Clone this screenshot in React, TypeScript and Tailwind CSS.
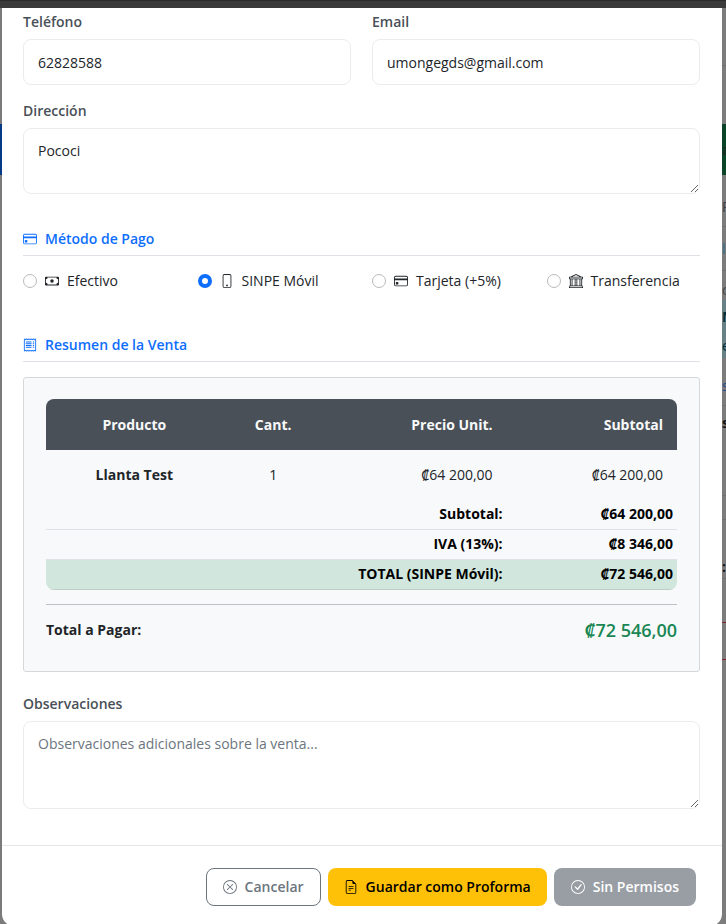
import type { ReactNode } from "react";
import {
  BsBank,
  BsCash,
  BsCheckCircle,
  BsCreditCard,
  BsFileEarmarkText,
  BsPhone,
  BsReceipt,
  BsXCircle,
} from "react-icons/bs";

const fieldClass =
  "block w-full rounded-lg border border-[#e9ecef] bg-white px-3.5 text-sm text-[#212529] placeholder:text-[#6c757d]";

function Field({ id, label, children }: { id: string; label: string; children: ReactNode }) {
  return (
    <div>
      <label htmlFor={id} className="mb-[7px] block text-sm leading-5 font-semibold text-[#495057]">
        {label}
      </label>
      {children}
    </div>
  );
}

function SectionTitle({ icon, children }: { icon: ReactNode; children: ReactNode }) {
  return (
    <h6 className="flex items-center gap-2 border-b border-[#dee2e6] pb-1.5 text-sm leading-5 font-semibold text-[#0d6efd]">
      {icon}
      {children}
    </h6>
  );
}

const methods = [
  { id: "efectivo", label: "Efectivo", icon: <BsCash size={14} /> },
  { id: "sinpe", label: "SINPE Móvil", icon: <BsPhone size={14} /> },
  { id: "tarjeta", label: "Tarjeta (+5%)", icon: <BsCreditCard size={14} /> },
  { id: "transferencia", label: "Transferencia", icon: <BsBank size={14} /> },
];

const totals = [
  { label: "Subtotal:", value: "₡64 200,00" },
  { label: "IVA (13%):", value: "₡8 346,00" },
];

function PageBehindLeft() {
  return (
    <div className="w-[2px] shrink-0 bg-[#7b7b7b]">
      <div className="h-[116px]" />
      <div className="h-[51px] bg-[#053a87]" />
    </div>
  );
}

// Rows of the page under the backdrop; only their left edge shows.
const behindRows = [
  { text: "", style: "h-[58px] border-b border-[#6f7071]" },
  { text: "", style: "h-[58px]" },
  { text: "a", style: "h-[51px] bg-[#0c442a] font-bold text-[#1c2b24]" },
  { text: "R", style: "h-[52px] border-b border-[#6f7071] pt-3 text-[#3c3d44]" },
  { text: "l", style: "h-[44px] border-b border-[#6f7071] text-[#2f6d8c]" },
  { text: "c", style: "h-[29px] pt-2 text-[#45474a]" },
  { text: "N", style: "h-[33px] bg-[#688186] font-bold text-[#04303a]" },
  { text: "e", style: "h-[25px] bg-[#688186] text-[#04303a]" },
  { text: "s", style: "h-[48px] border-b border-[#6f7071] pt-2 text-[#1f4a8a]" },
  { text: "s", style: "h-[34px] font-bold text-[#141619]" },
  { text: "", style: "h-[56px] border-b border-[#6f7071]" },
  { text: "", style: "h-[24px] border-b border-[#6f7071]" },
  { text: ":", style: "h-[59px] border-b border-[#6f7071] pt-9 font-bold text-[#141619]" },
  { text: "", style: "h-[44px] border-b border-[#842029]" },
  { text: "", style: "h-[37px] border-b border-[#842029]" },
];

function PageBehindRight() {
  return (
    <div aria-hidden="true" className="w-1 shrink-0 overflow-hidden bg-[#7c7c7c] text-sm leading-4">
      {behindRows.map((row, i) => (
        <div key={i} className={`flex items-center overflow-hidden ${row.style}`}>
          {row.text}
        </div>
      ))}
    </div>
  );
}

export default function App() {
  return (
    <div className="h-screen overflow-hidden bg-[#7b7b7b] font-['Open_Sans','Noto_Sans',sans-serif]">
      <div className="h-2 border-t border-[#2a2a2a] bg-[#3b3a3a]" />
      <div className="flex">
        <PageBehindLeft />
        <main className="min-w-0 flex-1 rounded-b-xl bg-white">
          <div className="pt-1 pr-[22px] pb-9 pl-[21px]">
            <div className="grid grid-cols-2 gap-x-[21px]">
              <Field id="telefono" label="Teléfono">
                <input id="telefono" type="tel" defaultValue="62828588" className={`${fieldClass} h-[46px]`} />
              </Field>
              <Field id="email" label="Email">
                <input id="email" type="email" defaultValue="umongegds@gmail.com" className={`${fieldClass} h-[46px]`} />
              </Field>
            </div>

            <div className="mt-4">
              <Field id="direccion" label="Dirección">
                <textarea id="direccion" defaultValue="Pococi" className={`${fieldClass} h-[66px] resize-y py-3`} />
              </Field>
            </div>

            <section className="mt-[35px]">
              <SectionTitle icon={<BsCreditCard size={14} />}>Método de Pago</SectionTitle>
              <div className="mt-[15px] grid grid-cols-4 gap-x-[21px]">
                {methods.map((m) => (
                  <label key={m.id} htmlFor={m.id} className="flex items-center gap-2 text-sm leading-5 whitespace-nowrap text-[#212529]">
                    <input
                      id={m.id}
                      type="radio"
                      name="metodo"
                      defaultChecked={m.id === "sinpe"}
                      className="size-3.5 shrink-0 appearance-none rounded-full border border-[#b8bbbe] bg-white checked:border-4 checked:border-[#0d6efd]"
                    />
                    {m.icon}
                    {m.label}
                  </label>
                ))}
              </div>
            </section>

            <section className="mt-11">
              <SectionTitle icon={<BsReceipt size={14} />}>Resumen de la Venta</SectionTitle>
              <div className="mt-[15px] rounded-[3px] border border-[#d5d7d9] bg-[#f8f9fa] px-[22px] pt-[21px] pb-[29px]">
                <div className="overflow-hidden rounded-lg">
                  <table className="w-full table-fixed text-sm leading-5">
                    <colgroup>
                      <col className="w-[28%]" />
                      <col className="w-[16%]" />
                      <col className="w-[29%]" />
                      <col className="w-[27%]" />
                    </colgroup>
                    <thead className="bg-[#495057] text-[#f8f9fa]">
                      <tr className="h-[51px]">
                        <th className="font-bold">Producto</th>
                        <th className="font-bold">Cant.</th>
                        <th className="pr-3.5 text-right font-bold">Precio Unit.</th>
                        <th className="pr-3.5 text-right font-bold">Subtotal</th>
                      </tr>
                    </thead>
                    <tbody className="text-[#212529]">
                      <tr className="h-[49px]">
                        <td className="text-center font-bold">Llanta Test</td>
                        <td className="text-center">1</td>
                        <td className="pr-3.5 text-right">₡64 200,00</td>
                        <td className="pr-3.5 text-right">₡64 200,00</td>
                      </tr>
                    </tbody>
                    <tfoot className="font-bold text-black">
                      {totals.map((t) => (
                        <tr key={t.label} className="h-[30px] border-b border-[#dee2e6]">
                          <td colSpan={3} className="pr-1 text-right">{t.label}</td>
                          <td className="pr-1 text-right">{t.value}</td>
                        </tr>
                      ))}
                      <tr className="h-[30px] border-b border-[#bcd0c7] bg-[#d1e7dd]">
                        <td colSpan={3} className="pr-1 text-right">TOTAL (SINPE Móvil):</td>
                        <td className="pr-1 text-right">₡72 546,00</td>
                      </tr>
                    </tfoot>
                  </table>
                </div>
                <hr className="mt-3.5 mb-[13px] border-[#bfc1c4]" />
                <div className="flex items-center justify-between">
                  <strong className="text-sm leading-5 font-bold text-[#212529]">Total a Pagar:</strong>
                  <span className="text-lg leading-6 font-semibold text-[#198754]">₡72 546,00</span>
                </div>
              </div>
            </section>

            <div className="mt-[22px]">
              <Field id="observaciones" label="Observaciones">
                <textarea
                  id="observaciones"
                  placeholder="Observaciones adicionales sobre la venta..."
                  className={`${fieldClass} h-[88px] resize-y py-3`}
                />
              </Field>
            </div>
          </div>

          <footer className="flex justify-end gap-[7px] border-t border-[#e4e6e8] px-[26px] pt-[22px] pb-5 text-sm leading-5 font-semibold">
            <button type="button" className="flex h-[38px] items-center gap-2 rounded-lg border border-[#6c757d] px-4 text-[#6c757d]">
              <BsXCircle size={14} />
              Cancelar
            </button>
            <button type="button" className="flex h-[38px] items-center gap-2 rounded-lg bg-[#ffc107] px-4 text-black">
              <BsFileEarmarkText size={14} />
              Guardar como Proforma
            </button>
            <button type="button" disabled className="flex h-[38px] items-center gap-2 rounded-lg bg-[#989ea4] px-[17px] text-white">
              <BsCheckCircle size={14} />
              Sin Permisos
            </button>
          </footer>
        </main>
        <PageBehindRight />
      </div>
    </div>
  );
}
